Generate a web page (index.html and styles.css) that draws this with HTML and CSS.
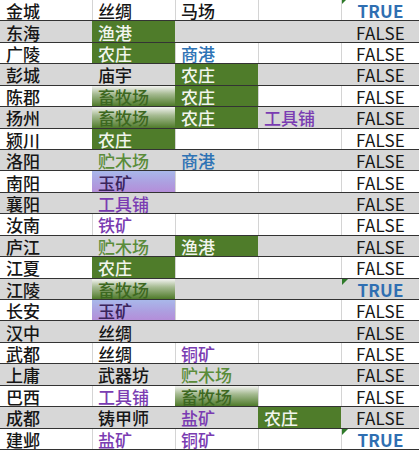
FILE: index.html
```html
<!DOCTYPE html>
<html lang="zh">
<head>
<meta charset="utf-8">
<title>城市建筑表</title>
<link rel="stylesheet" href="styles.css">
</head>
<body>
<div class="sheet">
  <div class="row">
    <div class="c">金城</div><div class="c">丝绸</div><div class="c">马场</div><div class="c"></div><div class="c bool true err err-top">TRUE</div>
  </div>
  <div class="row alt">
    <div class="c">东海</div><div class="c green">渔港</div><div class="c"></div><div class="c"></div><div class="c bool">FALSE</div>
  </div>
  <div class="row">
    <div class="c">广陵</div><div class="c green">农庄</div><div class="c blue">商港</div><div class="c"></div><div class="c bool">FALSE</div>
  </div>
  <div class="row alt">
    <div class="c">彭城</div><div class="c">庙宇</div><div class="c green">农庄</div><div class="c"></div><div class="c bool">FALSE</div>
  </div>
  <div class="row">
    <div class="c">陈郡</div><div class="c ggreen">畜牧场</div><div class="c green">农庄</div><div class="c"></div><div class="c bool">FALSE</div>
  </div>
  <div class="row alt">
    <div class="c">扬州</div><div class="c ggreen">畜牧场</div><div class="c green">农庄</div><div class="c purple">工具铺</div><div class="c bool">FALSE</div>
  </div>
  <div class="row">
    <div class="c">颍川</div><div class="c green">农庄</div><div class="c"></div><div class="c"></div><div class="c bool">FALSE</div>
  </div>
  <div class="row alt">
    <div class="c">洛阳</div><div class="c wood">贮木场</div><div class="c blue">商港</div><div class="c"></div><div class="c bool">FALSE</div>
  </div>
  <div class="row">
    <div class="c">南阳</div><div class="c gpurple">玉矿</div><div class="c"></div><div class="c"></div><div class="c bool">FALSE</div>
  </div>
  <div class="row alt">
    <div class="c">襄阳</div><div class="c purple">工具铺</div><div class="c"></div><div class="c"></div><div class="c bool">FALSE</div>
  </div>
  <div class="row">
    <div class="c">汝南</div><div class="c purple">铁矿</div><div class="c"></div><div class="c"></div><div class="c bool">FALSE</div>
  </div>
  <div class="row alt">
    <div class="c">庐江</div><div class="c wood">贮木场</div><div class="c green">渔港</div><div class="c"></div><div class="c bool">FALSE</div>
  </div>
  <div class="row">
    <div class="c">江夏</div><div class="c green">农庄</div><div class="c"></div><div class="c"></div><div class="c bool">FALSE</div>
  </div>
  <div class="row alt">
    <div class="c">江陵</div><div class="c ggreen">畜牧场</div><div class="c"></div><div class="c"></div><div class="c bool true err">TRUE</div>
  </div>
  <div class="row">
    <div class="c">长安</div><div class="c gpurple">玉矿</div><div class="c"></div><div class="c"></div><div class="c bool">FALSE</div>
  </div>
  <div class="row alt">
    <div class="c">汉中</div><div class="c">丝绸</div><div class="c"></div><div class="c"></div><div class="c bool">FALSE</div>
  </div>
  <div class="row">
    <div class="c">武都</div><div class="c">丝绸</div><div class="c purple">铜矿</div><div class="c"></div><div class="c bool">FALSE</div>
  </div>
  <div class="row alt">
    <div class="c">上庸</div><div class="c">武器坊</div><div class="c wood">贮木场</div><div class="c"></div><div class="c bool">FALSE</div>
  </div>
  <div class="row">
    <div class="c">巴西</div><div class="c purple">工具铺</div><div class="c ggreen">畜牧场</div><div class="c"></div><div class="c bool">FALSE</div>
  </div>
  <div class="row alt">
    <div class="c">成都</div><div class="c">铸甲师</div><div class="c purple">盐矿</div><div class="c green">农庄</div><div class="c bool">FALSE</div>
  </div>
  <div class="row">
    <div class="c">建邺</div><div class="c purple">盐矿</div><div class="c purple">铜矿</div><div class="c"></div><div class="c bool true err">TRUE</div>
  </div>
</div>
</body>
</html>
```

FILE: styles.css
```css
html, body {
  margin: 0;
  padding: 0;
  background: #ffffff;
}

.sheet {
  width: 419px;
  height: 450px;
  overflow: hidden;
  display: grid;
  grid-template-rows: repeat(21, 1fr);
  font-family: "Noto Sans CJK SC", "Noto Sans", sans-serif;
  font-size: 17px;
  font-weight: 500;
  color: #161616;
}

.row {
  display: grid;
  grid-template-columns: 92px 83px 83px 83px 78px;
  border-bottom: 1px solid #333333;
  background: #ffffff;
  min-height: 0;
}

.row.alt {
  background: #d7d7d7;
}

.c {
  position: relative;
  display: flex;
  align-items: center;
  padding-left: 5px;
  padding-top: 1px;
  white-space: nowrap;
  border-left: 1px solid #d4d4d4;
  min-height: 0;
  line-height: 1;
}

.c:first-child {
  border-left-color: transparent;
}

.row.alt .c {
  border-left-color: transparent;
}

.green {
  background: #4f7c2a;
  color: #f2f5ee;
  border-left-color: transparent;
}

.ggreen {
  background: linear-gradient(to bottom, #f3f3f1 0%, #a6bb92 40%, #4f7b2a 100%);
  color: #3d6821;
  border-left-color: transparent;
}

.gpurple {
  background: linear-gradient(to bottom, #a9b8ea 0%, #ad9fe0 55%, #b48ed9 100%);
  color: #3a245c;
  border-left-color: transparent;
}

.blue {
  color: #2e73b5;
}

.purple {
  color: #7a3cb2;
}

.wood {
  color: #5a8c3a;
}

.bool {
  justify-content: center;
  padding-left: 0;
  font-weight: 400;
  letter-spacing: 0.2px;
}

.true {
  color: #2f6fb2;
  font-weight: 700;
}

.err::before {
  content: "";
  position: absolute;
  left: 0;
  top: 0;
  width: 0;
  height: 0;
  border-top: 6px solid #2f7a2a;
  border-right: 6px solid transparent;
}

.err-top::before {
  top: -2px;
}
```
